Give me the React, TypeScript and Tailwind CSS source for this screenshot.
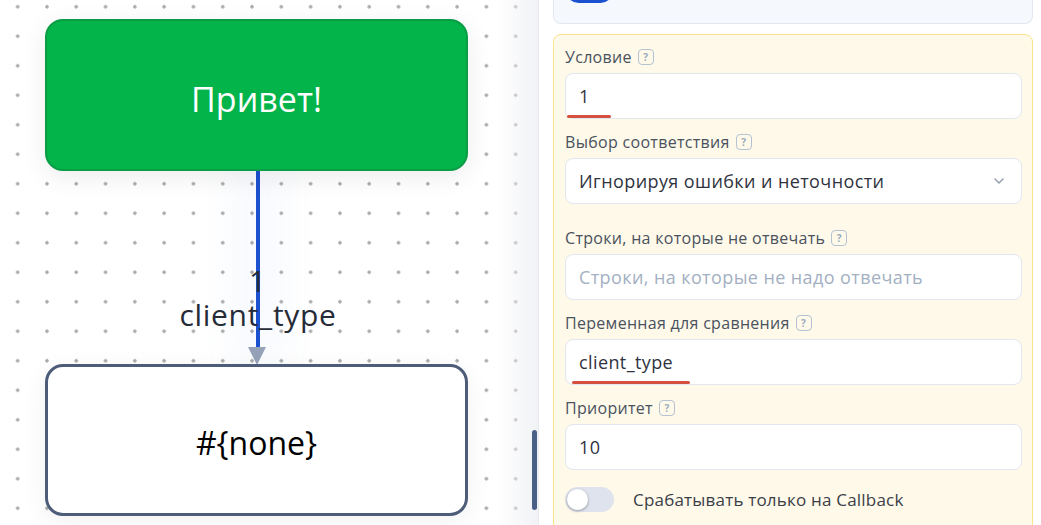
import { ChevronDown } from "lucide-react";

const font = { fontFamily: '"Open Sans", "Noto Sans", sans-serif' };

function Help() {
  return (
    <span className="ml-[6px] inline-flex h-[16px] w-[16px] items-center justify-center rounded-[4px] border-[1.5px] border-[#b4c2d4] text-[10px] font-bold leading-none text-[#9aabc0]">
      ?
    </span>
  );
}

function Label({ text, className = "" }: { text: string; className?: string }) {
  return (
    <div className={`flex h-[20px] items-center text-[16px] tracking-[0.3px] text-[#4a5260] ${className}`}>
      {text}
      <Help />
    </div>
  );
}

function Field({
  value,
  placeholder,
  underline,
}: {
  value?: string;
  placeholder?: string;
  underline?: string;
}) {
  return (
    <div className="relative mt-[6px] flex h-[46px] items-center rounded-lg border border-[#e2e6ef] bg-white px-[13px] text-[18px] tracking-[0.4px]">
      {value ? (
        <span className="text-[#2f3340]">{value}</span>
      ) : (
        <span className="text-[#a3b0c2]">{placeholder}</span>
      )}
      {underline && (
        <span className={`absolute bottom-[0px] h-[3px] rounded-full bg-[#d5503f] ${underline}`} />
      )}
    </div>
  );
}

function Canvas() {
  return (
    <div
      className="relative h-full w-[538px] shrink-0 overflow-hidden bg-white"
      style={{
        backgroundImage: "radial-gradient(circle, #a8a8a8 1.5px, transparent 1.7px)",
        backgroundSize: "29.3px 29.5px",
        backgroundPosition: "3px -8px",
      }}
    >
      <div className="absolute right-0 top-0 h-full w-[40px] bg-gradient-to-r from-transparent to-[#f1f2f5]" />

      {/* edge */}
      <div className="absolute left-[256px] top-[171px] h-[178px] w-[4px] bg-[#1b50cf] shadow-[0_0_40px_18px_rgba(120,150,230,0.07)]" />
      <div className="absolute left-[248px] top-[347px] h-0 w-0 border-x-[9px] border-t-[18px] border-x-transparent border-t-[#96a2b8]" />
      <div
        className="absolute left-[108px] top-[264px] w-[300px] text-center text-[30px] leading-[34px] tracking-[0.7px] text-[#262b38]"
        style={font}
      >
        <div>1</div>
        <div>client_type</div>
      </div>

      {/* nodes */}
      <div
        className="absolute left-[45px] top-[19px] flex h-[152px] w-[423px] items-center justify-center rounded-[18px] border-2 border-[#0a9d45] bg-[#03b44b] pt-[9px] text-[34px] text-white shadow-[0_6px_26px_rgba(0,0,0,0.08)]"
        style={font}
      >
        Привет!
      </div>
      <div
        className="absolute left-[45px] top-[364px] flex h-[152px] w-[423px] items-center justify-center rounded-[18px] border-[3px] border-[#4d5c78] bg-white pt-[6px] text-[32px] text-black shadow-[0_6px_26px_rgba(0,0,0,0.06)]"
        style={font}
      >
        #{"{none}"}
      </div>

      <div className="absolute right-[1px] top-[430px] h-[80px] w-[5px] rounded-full bg-[#4a5f87]" />
    </div>
  );
}

function Panel() {
  return (
    <div className="h-full flex-1 overflow-hidden border-l border-[#e8eaef] bg-white pl-[14px] pr-[8px]" style={font}>
      <div className="h-[24px] overflow-hidden rounded-b-lg border-x border-b border-[#e2e7ef] bg-[#f5f8fc] pl-[12px]">
        <div className="-mt-[22px] h-[25px] w-[47px] rounded-full bg-[#1b50cf]" />
      </div>

      <div className="mt-[10px] h-[520px] rounded-lg border border-[#fbe38c] bg-[#fef9e8] pl-[11px] pr-[10px] pt-[12px]">
        <Label text="Условие" />
        <Field value="1" underline="left-[1px] w-[44px]" />

        <Label text="Выбор соответствия" className="mt-[13px]" />
        <div className="mt-[6px] flex h-[46px] items-center justify-between rounded-lg border border-[#e2e6ef] bg-white pl-[13px] pr-[14px] text-[18px] tracking-[0.4px] text-[#2f3340]">
          <span>Игнорируя ошибки и неточности</span>
          <ChevronDown className="h-[16px] w-[16px] text-[#8e98a8]" strokeWidth={2} />
        </div>

        <Label text="Строки, на которые не отвечать" className="mt-[24px]" />
        <Field placeholder="Строки, на которые не надо отвечать" />

        <Label text="Переменная для сравнения" className="mt-[13px]" />
        <Field value="client_type" underline="left-[6px] w-[118px]" />

        <Label text="Приоритет" className="mt-[13px]" />
        <Field value="10" />

        <div className="mt-[17px] flex items-center">
          <div className="flex h-[25px] w-[49px] items-center rounded-full bg-[#dfe3ee] px-[2px]">
            <div className="h-[21px] w-[21px] rounded-full bg-white shadow-[0_1px_3px_rgba(0,0,0,0.35)]" />
          </div>
          <span className="ml-[19px] text-[17px] tracking-[0.2px] text-[#3a3e48]">Срабатывать только на Callback</span>
        </div>
      </div>
    </div>
  );
}

export default function App() {
  return (
    <div className="flex h-[525px] w-[1041px] overflow-hidden bg-white">
      <Canvas />
      <Panel />
    </div>
  );
}
